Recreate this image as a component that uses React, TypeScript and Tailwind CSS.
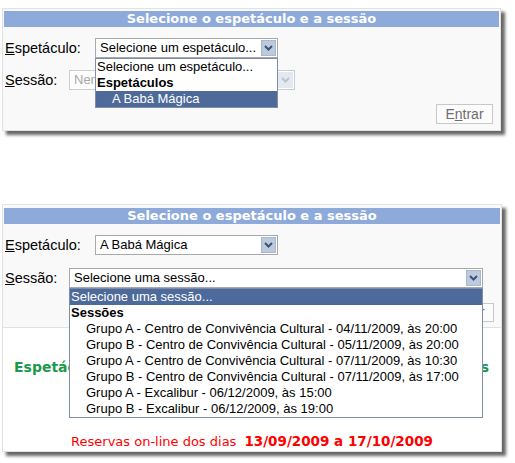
import React from "react";

function Chevron({ disabled }: { disabled?: boolean }) {
  return (
    <svg width="9" height="6" viewBox="0 0 9 6">
      <path
        d="M1 1 L4.5 4.5 L8 1"
        fill="none"
        stroke={disabled ? "#b9c2ce" : "#3f5275"}
        strokeWidth="2"
      />
    </svg>
  );
}

function Arrow({ disabled }: { disabled?: boolean }) {
  return (
    <div
      className={
        disabled
          ? "flex items-center justify-center w-[15px] my-[1px] mr-[1px] bg-[#e4e9f0] border border-[#e4e9f0]"
          : "flex items-center justify-center w-[15px] my-[1px] mr-[1px] bg-[#bccadd] border border-[#a9b8cd]"
      }
    >
      <Chevron disabled={disabled} />
    </div>
  );
}

function Header() {
  return (
    <div className="h-[16px] bg-[#8eaadb] text-white font-bold text-[13px] leading-[16px] text-center whitespace-nowrap font-['DejaVu_Sans',Verdana,sans-serif]">
      Selecione o espetáculo e a sessão
    </div>
  );
}

const sessoes = [
  "Grupo A - Centro de Convivência Cultural - 04/11/2009, às 20:00",
  "Grupo B - Centro de Convivência Cultural - 05/11/2009, às 20:00",
  "Grupo A - Centro de Convivência Cultural - 07/11/2009, às 10:30",
  "Grupo B - Centro de Convivência Cultural - 07/11/2009, às 17:00",
  "Grupo A - Excalibur - 06/12/2009, às 15:00",
  "Grupo B - Excalibur - 06/12/2009, às 19:00",
];

export default function App() {
  return (
    <div className="w-[515px] h-[463px] bg-white overflow-hidden text-black font-['Liberation_Sans',Arial,sans-serif]">
      {/* Panel 1 */}
      <div className="ml-[2px] mt-[8px] w-[499px] border border-[#e2e2e2] bg-[#f9f9f9] shadow-[4px_4px_3px_rgba(0,0,0,0.6)] px-[1px] pt-[2px] pb-[6px]">
        <Header />
        <div className="mt-[11px] flex items-center h-[20px] pl-[1px]">
          <div className="w-[90px] text-[14.5px] leading-[20px]">
            <span className="underline">E</span>spetáculo:
          </div>
          <div className="relative w-[183px] h-[20px] flex border border-[#a5a9ae] bg-white">
            <div className="flex-1 pl-[4px] text-[13px] leading-[18px] whitespace-nowrap">
              Selecione um espetáculo...
            </div>
            <Arrow />
            <div className="absolute left-[-1px] top-[19px] w-[183px] border border-[#7f8ea6] bg-white z-10 text-[13px] leading-[16px]">
              <div className="h-[16px] pl-[1px] whitespace-nowrap">Selecione um espetáculo...</div>
              <div className="h-[16px] pl-[1px] font-bold">Espetáculos</div>
              <div className="h-[16px] pl-[16px] bg-[#4d6a9b] text-white">A Babá Mágica</div>
            </div>
          </div>
        </div>
        <div className="mt-[12px] flex items-center h-[20px] pl-[1px]">
          <div className="w-[64px] text-[14.5px] leading-[20px]">
            <span className="underline">S</span>essão:
          </div>
          <div className="w-[226px] h-[20px] flex border border-[#cbcdd0] bg-[#fdfdfd]">
            <div className="flex-1 pl-[4px] text-[13px] leading-[18px] text-[#a8a8a8] whitespace-nowrap overflow-hidden">
              Nenhuma sessão
            </div>
            <Arrow disabled />
          </div>
        </div>
        <div className="mt-[14px] flex justify-end pr-[6px]">
          <div className="w-[57px] h-[20px] border border-[#c8c8c8] bg-[#fcfcfc] text-[14px] leading-[18px] text-[#6e6e6e] text-center">
            E<span className="underline">n</span>trar
          </div>
        </div>
      </div>

      {/* Panel 2 */}
      <div className="ml-[2px] mt-[73px] w-[500px] border border-[#e2e2e2] bg-[#f9f9f9] shadow-[4px_4px_3px_rgba(0,0,0,0.6)]">
        <div className="px-[1px] pt-[3px] pb-[5px] border-b border-[#e0e0e0]">
          <Header />
          <div className="mt-[11px] flex items-center h-[20px] pl-[1px]">
            <div className="w-[90px] text-[14.5px] leading-[20px]">
              <span className="underline">E</span>spetáculo:
            </div>
            <div className="w-[183px] h-[20px] flex border border-[#a5a9ae] bg-white">
              <div className="flex-1 pl-[4px] text-[13px] leading-[18px] whitespace-nowrap">A Babá Mágica</div>
              <Arrow />
            </div>
          </div>
          <div className="mt-[13px] flex items-center h-[20px] pl-[1px]">
            <div className="w-[64px] text-[14.5px] leading-[20px]">
              <span className="underline">S</span>essão:
            </div>
            <div className="relative w-[414px] h-[20px] flex border border-[#a5a9ae] bg-white">
              <div className="flex-1 pl-[4px] text-[13px] leading-[18px] whitespace-nowrap">Selecione uma sessão...</div>
              <Arrow />
              <div className="absolute left-[-1px] top-[19px] w-[414px] border border-[#7f8ea6] bg-white z-10 text-[13px] leading-[16px]">
                <div className="h-[16px] pl-[1px] bg-[#4d6a9b] text-white">Selecione uma sessão...</div>
                <div className="h-[16px] pl-[1px] font-bold">Sessões</div>
                {sessoes.map((s) => (
                  <div key={s} className="h-[16px] pl-[16px] whitespace-nowrap">
                    {s}
                  </div>
                ))}
              </div>
            </div>
          </div>
          <div className="mt-[15px] flex justify-end pr-[6px]">
            <div className="w-[57px] h-[19px] border border-[#c8c8c8] bg-[#fcfcfc] text-[14px] leading-[17px] text-[#6e6e6e] text-center">
              E<span className="underline">n</span>trar
            </div>
          </div>
        </div>
        <div className="h-[123px] bg-white flex flex-col font-['DejaVu_Sans',Verdana,sans-serif]">
          <div className="mt-[31px] flex justify-between pl-[11px] pr-[12px] text-[14px] leading-[16px] font-bold text-[#1b9a4c]">
            <span>Espetáculo: A Babá Mágica</span>
            <span>6 sessões</span>
          </div>
          <div className="mt-[58px] text-center text-[13px] leading-[16px] text-[#ff0000] whitespace-nowrap">
            Reservas on-line dos dias<b className="ml-[8px] text-[13.5px]">13/09/2009 a 17/10/2009</b>
          </div>
        </div>
      </div>
    </div>
  );
}
